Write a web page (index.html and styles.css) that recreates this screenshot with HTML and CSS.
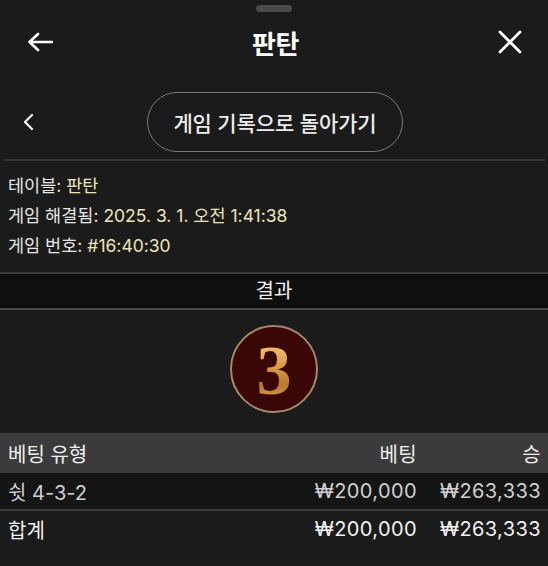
FILE: index.html
```html
<!DOCTYPE html>
<html lang="ko">
<head>
    <meta charset="UTF-8">
    <meta name="viewport" content="width=device-width, initial-scale=1.0">
    <title>판탄 - 게임 결과</title>
    <link rel="stylesheet" href="styles.css">
</head>
<body>
    <div class="sheet">
        <div class="handle"></div>

        <!-- Barre du haut -->
        <header class="topbar">
            <button class="icon-btn" aria-label="뒤로">
                <svg width="26" height="20" viewBox="0 0 26 20">
                    <path d="M25 10H3M11 2L2.5 10L11 18" fill="none" stroke="#fff" stroke-width="2.6" stroke-linecap="round" stroke-linejoin="round"/>
                </svg>
            </button>
            <h1 class="title">판탄</h1>
            <button class="icon-btn" aria-label="닫기">
                <svg width="24" height="24" viewBox="0 0 24 24">
                    <path d="M2 2L22 22M22 2L2 22" fill="none" stroke="#fff" stroke-width="2.8" stroke-linecap="round"/>
                </svg>
            </button>
        </header>

        <div class="back-row">
            <span class="chevron">
                <svg width="11" height="18" viewBox="0 0 11 18">
                    <path d="M9 2L2 9L9 16" fill="none" stroke="#eee" stroke-width="2.4" stroke-linecap="round" stroke-linejoin="round"/>
                </svg>
            </span>
            <button class="pill">게임 기록으로 돌아가기</button>
        </div>

        <div class="info">
            <p>테이블: <span class="val">판탄</span></p>
            <p>게임 해결됨: <span class="val">2025. 3. 1. 오전 1:41:38</span></p>
            <p>게임 번호: <span class="val">#16:40:30</span></p>
        </div>

        <div class="section-title">결과</div>

        <div class="result">
            <div class="ball"><span>3</span></div>
        </div>

        <div class="bets">
            <div class="bets-row head">
                <span>베팅 유형</span>
                <span class="num">베팅</span>
                <span class="num">승</span>
            </div>
            <div class="bets-row line">
                <span>쉿 4-3-2</span>
                <span class="num">₩200,000</span>
                <span class="num">₩263,333</span>
            </div>
            <div class="bets-row total">
                <span>합계</span>
                <span class="num">₩200,000</span>
                <span class="num">₩263,333</span>
            </div>
        </div>
    </div>
</body>
</html>
```

FILE: styles.css
```css
* {
    margin: 0;
    padding: 0;
    box-sizing: border-box;
}

body {
    background-color: #1b1b1b;
    color: #ececec;
    font-family: 'Inter', 'Noto Sans CJK KR', sans-serif;
    min-height: 100vh;
}

.sheet {
    display: flex;
    flex-direction: column;
}

/* Poignée */
.handle {
    width: 36px;
    height: 7px;
    margin: 5px auto 0;
    border-radius: 4px;
    background: #4a4a4a;
}

/* Barre du haut */
.topbar {
    height: 60px;
    display: flex;
    align-items: center;
    justify-content: space-between;
    padding: 0 26px 0 27px;
}

.icon-btn {
    background: none;
    border: none;
    display: flex;
    align-items: center;
    cursor: pointer;
}

.title {
    font-size: 26px;
    font-weight: 700;
    color: #fff;
    letter-spacing: -0.5px;
}

/* Retour à l'historique */
.back-row {
    display: grid;
    grid-template-columns: 1fr auto 1fr;
    align-items: center;
    padding: 20px 0 7px;
    margin: 0 3px 0 5px;
    border-bottom: 2px solid #363636;
}

.chevron {
    display: flex;
    padding-left: 18px;
}

.pill {
    width: 256px;
    height: 60px;
    border-radius: 30px;
    border: 1.5px solid #7a7a7a;
    background: transparent;
    color: #ececec;
    font-family: inherit;
    font-size: 21px;
    font-weight: 500;
    letter-spacing: -0.1px;
}

/* Infos de la partie */
.info {
    padding: 10px 8px 11px;
    font-size: 17.5px;
    line-height: 30px;
    color: #e6e6e6;
}

.val {
    color: #ebe4ba;
}

/* Titre de section */
.section-title {
    height: 38px;
    border-top: 2px solid #383838;
    border-bottom: 2px solid #4a4a4a;
    background: #0f0f0f;
    text-align: center;
    font-size: 20px;
    line-height: 34px;
    color: #f0f0f0;
}

.result {
    display: flex;
    justify-content: center;
    padding: 15px 0 20px;
}

.ball {
    width: 88px;
    height: 88px;
    border-radius: 50%;
    border: 2px solid #a48769;
    background: #3a0706;
    display: flex;
    align-items: center;
    justify-content: center;
}

.ball span {
    font-family: 'Liberation Serif', serif;
    font-weight: 700;
    font-size: 70px;
    line-height: 1;
    margin-top: 3px;
    background: linear-gradient(180deg, #f6cf86 0%, #d89a44 45%, #b7772d 70%, #e8b062 100%);
    -webkit-background-clip: text;
    background-clip: text;
    color: transparent;
}

/* Tableau des mises */
.bets-row {
    display: grid;
    grid-template-columns: 1fr 120px 124px;
    align-items: center;
    padding: 0 7px 0 8px;
    font-size: 20px;
}

.bets-row .num {
    text-align: right;
    letter-spacing: 0.4px;
}

.bets-row.head {
    height: 40px;
    background: #3b3b3b;
    color: #f0f0f0;
}

.bets-row.line {
    height: 38px;
    background: #151515;
    border-bottom: 2px solid #3a3a3a;
    color: #cfcfcf;
}

.bets-row.total {
    height: 36px;
    color: #f2f2f2;
}
```
